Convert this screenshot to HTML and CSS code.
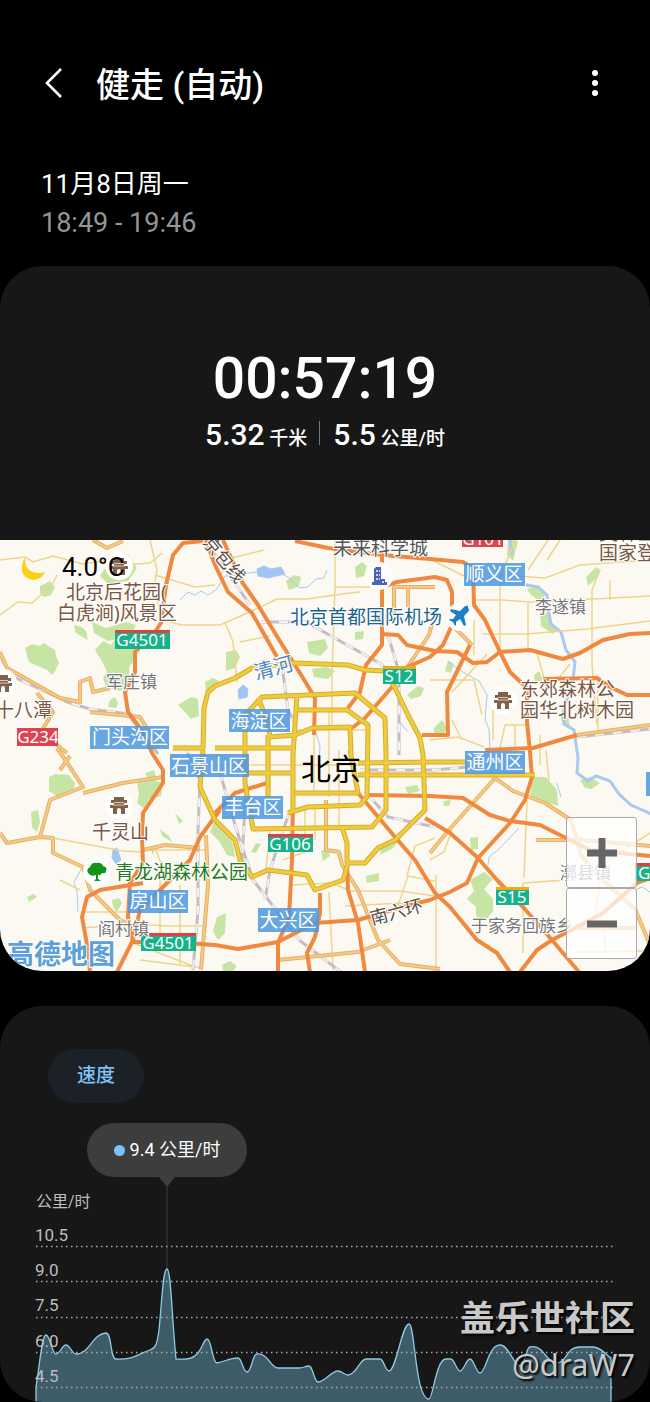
FILE: index.html
```html
<!DOCTYPE html>
<html lang="zh-CN">
<head>
    <meta charset="UTF-8">
    <meta name="viewport" content="width=device-width, initial-scale=1.0">
    <title>健走 (自动)</title>
    <link rel="stylesheet" href="styles.css">
</head>
<body>
    <header class="top-bar">
        <a href="#" class="back" aria-label="返回">
            <svg width="20" height="32" viewBox="0 0 20 32"><path d="M17 2 3 16l14 14" fill="none" stroke="#fff" stroke-width="2.6"/></svg>
        </a>
        <h1>健走 (自动)</h1>
        <button class="more" aria-label="更多">
            <svg width="8" height="28" viewBox="0 0 8 28" fill="#fff"><circle cx="4" cy="4" r="3"/><circle cx="4" cy="14" r="3"/><circle cx="4" cy="24" r="3"/></svg>
        </button>
    </header>

    <div class="when">
        <p>11月8日周一</p>
        <p class="hours">18:49 - 19:46</p>
    </div>

    <section class="summary">
        <div class="totals">
            <p class="duration">00:57:19</p>
            <div class="stats">
                <p><b>5.32</b> 千米</p>
                <p><b>5.5</b> 公里/时</p>
            </div>
        </div>

        <div class="map">
            <svg class="map-canvas" viewBox="0 540 650 431" role="img" aria-label="北京地图">
                <defs>
                    <g id="temple">
                        <circle r="14" fill="#fff"/>
                        <path d="M-5-8h10v3h3v3h-3v2h4v3H6v6H2V5q0-2-2-2t-2 2v4h-4V3h-3V0h4v-2h-3v-3h3z" fill="#80614a"/>
                        <path d="M-5-2.500H5M-6 0H6" stroke="#d9c9b8" fill="none"/>
                    </g>
                </defs>

                <!-- parks -->
                <g class="park">
                    <path d="M25 648l7-4 8 2 4-3 6 4 5 3 1 6 3 7-4 8-3 4-5-5-7-3-11-5z"/>
                    <path d="M95 650l8-9 8 4 5-7 9 4 9 5v14l-5 6 1 18-10 6-14-4-3-9 4-6-4-9z"/>
                    <path d="M74 625l8 2 4 4 2 9-7-4-6-4zM92 622l14 6 20-6 10 3-6 12-22 4-14-8z"/>
                    <path d="M110 560l18-6 9 14-9 13-20 3-8-8zM40 586l10-5 5 6-4 8-7 2-4-4z"/>
                    <path d="M178 705l13-8 7 2 1 17-8 3-6-7zM205 682l8-4 6 3-5 9-8 1zM110 700l5-3 3 6-2 5-8-1z"/>
                    <path d="M49 777l6-3 14 1 6 8-2 9-15 5-9-6zM31 812l7-2 2 12-3 10-5-4z"/>
                    <path d="M137 783l14-4 12 4-2 13-12 3-4 10-8-6 2-9zM145 773l9-3 2 6-7 4z"/>
                    <path d="M27 897l7-3 3 3-8 5zM112 900l7-2 3 5-5 9-4-5zM160 829l9 7 3 6-10-6zM175 813l8 8-4 3zM151 846l6 1-5 8z"/>
                    <path d="M215 820l10 8 8 16 2 13-8-2-8-14-9-9zM217 917l9-4-1 20-7 7-5-9zM222 965l8-4 7 5-4 5h-10z"/>
                    <path d="M226 652l10-2 4 7-5 11-9 3zM307 642l18-3 3 9-8 8-11-3zM312 669l14-2 9 4-7 8-14-2zM355 632l9-1-1 8-8 1z"/>
                    <path d="M355 567l7-5 5 4-3 10-8 2zM286 581l8-6 7 2-2 9-10 4zM407 695l11-9 6 2-3 8-10 3z"/>
                    <path d="M508 540l10 1-5 20-6-6zM527 589l10-3 8 8-2 9-12-8zM540 612l8 2 3 8 7 7-5 5-12-8zM586 577l10-10 5 3-5 9-8 7z"/>
                    <path d="M534 675l5-4 4 9-8 5zM434 728l8-8 5 8-4 8-9-2zM448 660l6 4-3 9-6-2zM560 715l8 3 2 8-7-2z"/>
                    <path d="M533 777h13l11 13 1 16-13-4-15-7zM470 838l8-1v12l-7 1zM580 780l10-3 10 6-8 6-7-1z"/>
                    <path d="M470 880l14-8 9 7-9 10 9 10v12l-7 9-10-3v-10l-9-8 7-8zM405 787l12-2 3 6-12 3zM381 847l14-8 7-2-9 11-13 7zM366 876l13-3v8l-12 2z"/>
                    <path d="M321 851l7-3 2 8-7 5zM256 843l5 1-5 9-5-1zM443 801l8-1-2 6h-5z"/>
                </g>

                <!-- water -->
                <g class="water">
                    <path d="M180 600l8-8 7 3 6-4 7 4 8-5 9-14 10-1 21-3 12 2 10-2 12 6 9 10 9-1 8-8 8-1 3-8"/>
                    <path d="M82 868l-8 14 3 10 1 20M650 892l-8-5-7 3M400 722l7 9M315 730l5 16-1 20M490 750l-1-21-4-9 2-25-8-14-16-9-15-10"/>
                    <path class="river" d="M510 540l2 15M526 585l12 2 9 8 1 14 3 15 10 8 5 18 9 12-2 18-5 16-5 16 1 12 10 6 4 28-1 15 11 8 8-5 14 5 9 13 12 11 16 7 10 6"/>
                    <path d="M557 783l4 14M488 865l1-8 10-8 20-21M500 905l12-12"/>
                    <path d="M257 569l7-3 7 3 10-2 4 7-17 4-10-2zM238 690l5-5 5 4-1 8-8 2zM113 850l4-2 4 12-5 4-4-6z" fill="#9fc5f0"/>
                </g>

                <!-- minor roads -->
                <g class="lane">
                    <path d="M0 560l25-3 8 5 20-6 30 8 20-3 22 4 25-2 12-10M0 615l18-13 14 1 20-18 5-10M150 540l7 30-3 18 8 32 20 5h38l32-14 25-12h30l35-5 18-2"/>
                    <path d="M335 540v47l-3 90v48M225 622l8 20 4 40M240 642l30-6M220 575l12-17 32-8M155 575l40 12 20-2M335 587h47"/>
                    <path d="M474 600h28l28 2 63-3 57-3M500 575l45 3 35-13 70-5M515 540l-15 38M548 540l-20 30M560 540l-13 20M600 570l-8 20v75l5 60M610 580v20"/>
                    <path d="M482 634h45l60-5 63-8M487 654l-35 38M493 690v50M474 620v35M528 603v47M500 572v78M430 559l40 20M430 680h44l8 35M558 679l12-15M536 650l10 35"/>
                    <path d="M430 740l28-3 26 10M452 720l10 20M505 725h25M515 725v23M540 735v30M598 680v52M505 725l-5 23M546 750l3 30M527 800l-3 78M523 883l43-3"/>
                    <path d="M53 838l70 13 20 1M60 880l20 10M83 912h55M83 928l50-4 36 2h38M150 850h55M160 880v70M180 885v80M155 848l12 30M140 960l63 8M133 943l60 23"/>
                    <path d="M291 885l40-2 20 8h50l34 5M329 892l4 78M345 906l58-3M315 840v-34M339 750v77M398 906l10-30 27 5M435 838l-20 8-8 30M430 860l14-8 8-22M436 875v97M523 883v70M577 952l67-1M601 915l5 36M595 913l9-50 46-30"/>
                    <path d="M270 830l-4 40M305 810v42l-22 8M231 812h25M270 741v50M314 735v60M329 710v87M215 765h145M293 730h75"/>
                </g>

                <!-- railways -->
                <g class="rail">
                    <path d="M205 540l45 65M261 622h45l75 42 8 8M282 665l6 45 8 15M215 755l20 70 18 55 46 60 42 32M0 655l10 20 60 28 20 6 38 5 30 40"/>
                    <path d="M388 635l11 37v83M200 780l-2 50 0 80-5 60M184 745l18 40M290 810l-20 60-5 30M360 770h75l32-3M368 795l20 22 47 10M577 737l73-8M246 790l-4 70"/>
                </g>
                <g class="rail rail-dash">
                    <path d="M205 540l45 65M261 622h45l75 42 8 8M282 665l6 45 8 15M215 755l20 70 18 55 46 60 42 32M0 655l10 20 60 28 20 6 38 5 30 40"/>
                    <path d="M388 635l11 37v83M200 780l-2 50 0 80-5 60M184 745l18 40M290 810l-20 60-5 30M360 770h75l32-3M368 795l20 22 47 10M577 737l73-8M246 790l-4 70"/>
                </g>

                <!-- country roads -->
                <g class="road-case">
                    <path id="r1" d="M0 652l7 16 30 17 23 13 20 4v-20l10-4 3 14 17-4M37 693l16 19-12 20 26 21M57 748l13 19 13 20-33 13-10 37-33 6-7-10M83 793l40-10 40-6M40 837l13 1v15l30 14 7 23 30 30 20 10"/>
                    <path id="r2" d="M93 540l14 8 16-7M394 613v-26h41M408 587v20M404 672l25-37 6-22M452 625l20 20M326 800v50l13 2 3 13 16 25 20 50 22 24 40 5"/>
                    <path id="r3" d="M495 778l-22 25-25 28-18 22M495 778l18 13 32 12 26 17 10 35 16 20 38 34 15 36M577 735l73-10M536 840h46l68 6M278 960l80-8 32-12M577 928h60M206 835l2 50-7 85M143 850l22-5 35 3M60 770l10-14M90 712l50 5 18 30"/>
                </g>
                <g class="road-tan">
                    <use href="#r1"/><use href="#r2"/><use href="#r3"/>
                </g>

                <!-- motorways -->
                <g class="motorway">
                    <path d="M206 540l9 25 13 27 24 21 25 44M203 541l-20 2-10 12-7 30-5 38-6 9-20 20v20l-10 20 3 20 15 20 9 21 11 17v13l-20 30-1 24 1 26-13 20-2 34 5 24"/>
                    <path d="M223 540l19 42 16 23 20 33 25 40 12 20-1 37M295 541l33 7 54 7 48 4 33 3 10 6 1 37 11 15 15 32 10 20 17 16v34l3 30 2 25-7 23-15 23-32 35-11 25-17 9-20 8-28 7-44 13-43 3-37 19-40 7-23-4-30-2-52-1"/>
                    <path d="M382 555v90l-16 20-6 27-12 16M382 587l15-5 38-5 12 3 5 12v33l-9 20-13 12-25 11-13 19-27 31-13 10M382 634l16 1 9 10 28 6 22 1 16 11 14-1 13-10 30-2 33 9 17-6 23-13 27-6 20-1"/>
                    <path d="M470 645l-23 47 1 43h-26M543 679l54-1 13 9 17 8h23M485 750l48-2 44-13"/>
                    <path d="M358 793l37 44 20 23 20 33 15 14 27 33 20 13 13 19M368 795l62 1 33 2 27 17 20 6 30 4 30 15 20 10 60 6M425 818l25 15 27 24 20 23 26 27 29 33 27 32M520 972l17-22 15-10 25-13 26-14 34-30 13-5"/>
                    <path d="M293 797l-1 63-3 57-11 26v29M347 863l1 27 10 33 7 49M320 893v20l-5 24-8 16 3 19M215 813l20-20 32-10M220 810l-20 27-10 23-23 23-27 27-7 30-16 32M143 883l-43 7-13 7-5 20 6 33 2 22"/>
                </g>

                <!-- ring roads -->
                <g class="ring-case">
                    <path d="M173 748h30l1-40 4-16 7-6 20-8 17-10 41-5 55 2 17 5 20 1 10 17 13 27 12 23 3 17 2 55-30 30-17 8-13 15h-17l-5 17-28 10-8-15-39-5-16 7-12-17-5-20-20-20-15-33 3-37"/>
                    <path d="M245 750v-35l17-18 93-4 30 25 1 37v55l-14 17-119 2-8-46v-40M297 695l-4 60v55M298 710h49l21 15-1 72-7 8-52 2-20 6M258 698l10 24 2 15 25-2 17-7 38-1 1 26"/>
                    <path d="M245 773h50M268 735v62M215 748h78M350 750l8 43h-63M358 763l77-1h32M358 775h177M342 827l5 16v20"/>
                </g>
                <g class="ring">
                    <path d="M173 748h30l1-40 4-16 7-6 20-8 17-10 41-5 55 2 17 5 20 1 10 17 13 27 12 23 3 17 2 55-30 30-17 8-13 15h-17l-5 17-28 10-8-15-39-5-16 7-12-17-5-20-20-20-15-33 3-37"/>
                    <path d="M245 750v-35l17-18 93-4 30 25 1 37v55l-14 17-119 2-8-46v-40M297 695l-4 60v55M298 710h49l21 15-1 72-7 8-52 2-20 6M258 698l10 24 2 15 25-2 17-7 38-1 1 26"/>
                    <path d="M245 773h50M268 735v62M215 748h78M350 750l8 43h-63M358 763l77-1h32M358 775h177M342 827l5 16v20"/>
                </g>

                <!-- place marks -->
                <use href="#temple" x="119" y="805"/>
                <use href="#temple" x="503" y="700"/>
                <use href="#temple" x="3" y="683"/>
                <use href="#temple" x="119" y="566"/>
                <g transform="translate(379 576)">
                    <circle r="14" fill="#fff"/>
                    <path d="M-5-7l2-2h5v12h4v3h2v3H-7V6h2z" fill="#4f62ad"/>
                    <path d="M-3-6h2v2h-2zM0-6h1v2H0zM-3-2h2v2h-2zM0-2h1v2H0zM-3 2h2v2h-2zM0 2h1v2H0zM3 5h2v2H3z" fill="#c9d2f2"/>
                </g>
                <g transform="translate(460 617)">
                    <circle r="14" fill="#fff"/>
                    <path d="M8-9q2 1 0 4L4-1l2 9-2 1-4-7-4 3 0 3-1 1-2-4-4-2 1-1h3l3-4-6-4 1-2 9 2 4-4q2-2 4-1z" fill="#1f7fc4"/>
                </g>
                <g transform="translate(97 872)">
                    <circle r="14" fill="#fff"/>
                    <path d="M-9 1q-2-4 2-6 2-5 7-4 4-1 6 3 5 1 3 5 0 3-4 2-3 4-4 1v5l3 2h-7l2-2V3q-5 2-8-2z" fill="#149414"/>
                </g>

                <g class="road-no">
                    <path d="M115 630h55v19h-55zM141 933h55v18h-55zM268 834h45v18h-45zM383 666h33v18h-33zM496 887h33v18h-33zM635 863h20v18h-20z" fill="#16b28a"/>
                    <path d="M115 630h55v3h-55zM141 933h55v3h-55zM268 834h45v3h-45zM635 863h20v3h-20z" fill="#e0403f"/>
                    <path d="M383 666h33v3h-33zM496 887h33v3h-33z" fill="#e9ac1a"/>
                    <path d="M17 728h41v18H17zM462 530h41v17h-41z" fill="#dd4350"/>
                    <text x="142" y="646">G4501</text>
                    <text x="168" y="949">G4501</text>
                    <text x="290" y="850">G106</text>
                    <text x="399" y="682">S12</text>
                    <text x="512" y="903">S15</text>
                    <text x="38" y="743">G234</text>
                    <text x="483" y="545">G101</text>
                    <text x="654" y="879">G95</text>
                </g>

                <g class="district">
                    <path d="M229 709h61v23h-61zM90 726h79v23H90zM170 754h79v23h-79zM222 796h61v23h-61zM464 563h61v23h-61zM465 751h60v23h-60zM128 890h60v23h-60zM258 908h61v24h-61zM646 772h10v24h-10z"/>
                    <text x="259" y="728">海淀区</text>
                    <text x="130" y="744">门头沟区</text>
                    <text x="209" y="773">石景山区</text>
                    <text x="253" y="814">丰台区</text>
                    <text x="494" y="581">顺义区</text>
                    <text x="495" y="769">通州区</text>
                    <text x="158" y="908">房山区</text>
                    <text x="288" y="927">大兴区</text>
                </g>

                <g class="sight">
                    <text x="66" y="599">北京后花园(</text>
                    <text x="57" y="620">白虎涧)风景区</text>
                    <text x="520" y="696">东郊森林公</text>
                    <text x="520" y="717">园华北树木园</text>
                    <text x="92" y="839">千灵山</text>
                    <text x="-5" y="717">十八潭</text>
                    <text x="599" y="560">国家登山</text>
                    <text x="599" y="540">奥林匹克</text>
                    <text x="290" y="624" fill="#1a6490">北京首都国际机场</text>
                    <text x="115" y="879" fill="#1e7a20">青龙湖森林公园</text>
                    <text x="333" y="555" fill="#555">未来科学城</text>
                </g>
                <g class="town">
                    <text x="106" y="688">军庄镇</text>
                    <text x="535" y="613">李遂镇</text>
                    <text x="98" y="935">阎村镇</text>
                    <text x="471" y="932">于家务回族乡</text>
                    <text x="560" y="879">漷县镇</text>
                </g>
                <text class="road-name" transform="translate(372 925) rotate(-15)">南六环</text>
                <text class="road-name" transform="translate(202 543) rotate(50)">京包线</text>
                <text class="river-name" transform="translate(256 680) rotate(-15)">清河</text>
                <text class="city" x="331" y="780">北京</text>

                <path d="M26 557q-3 11 7 15 6 2 12 0-4 8-12 8-9-1-11-9-1-9 4-14z" fill="#ffd018"/>
                <text class="temperature" x="62" y="576">4.0°C</text>
                <text class="map-brand" x="7" y="964">高德地图</text>
            </svg>
            <div class="zoom">
                <button aria-label="放大"><svg width="30" height="30" viewBox="0 0 30 30"><path d="M15 0v30M0 15h30" stroke="#666" stroke-width="7"/></svg></button>
                <button aria-label="缩小"><svg width="30" height="30" viewBox="0 0 30 30"><path d="M0 15h30" stroke="#666" stroke-width="7"/></svg></button>
            </div>
        </div>
    </section>

    <section class="speed">
        <button class="tab">速度</button>
        <div class="tooltip"><span class="dot"></span>9.4 公里/时</div>
        <svg class="chart" viewBox="0 1177 650 225" role="img" aria-label="速度 公里/时">
            <path d="M159 1177h16l-8 10z" fill="#3d3d3d"/>
            <path d="M167 1187v83" stroke="#3d3d3d"/>
            <path class="area" d="M36 1402V1387C40 1362 42 1335 46 1335C50 1335 52 1354 56 1354C60 1354 62 1345 66 1345C70 1345 72 1354 76 1354C90 1354 92 1334 106 1333C112 1333 110 1359 116 1359C133 1360 138 1354 150 1350C156 1348 157 1344 159 1330C162 1300 163 1269 167 1269C171 1269 172 1320 176 1359C187 1359 191 1360 197 1354C202 1349 204 1339 207 1339C212 1339 212 1363 217 1363C226 1361 230 1358 238 1358C242 1358 243 1372 247 1372C252 1372 252 1354 257 1354C268 1353 271 1368 278 1368H299C303 1368 305 1366 309 1366C313 1366 314 1382 318 1382C325 1382 331 1371 338 1371C342 1371 344 1375 348 1375C356 1375 360 1359 366 1359H380C384 1359 385 1371 389 1371C396 1371 402 1324 409 1324C415 1324 415 1399 429 1399C433 1399 436 1359 446 1359H451C454 1359 457 1371 460 1371C464 1371 466 1359 470 1359C474 1359 476 1373 480 1373C486 1373 488 1345 500 1345C509 1345 514 1366 520 1366C525 1366 526 1347 530 1347C544 1344 546 1363 556 1363C568 1363 565 1347 580 1347H593C601 1347 605 1354 611 1358V1402"/>
            <path class="grid" d="M36 1246.500H615M36 1281.500H615M36 1317.500H615M36 1352.500H615M36 1387.500H615"/>
            <g class="axis">
                <text class="unit" x="36" y="1207">公里/时</text>
                <text x="35" y="1241">10.5</text>
                <text x="35" y="1276">9.0</text>
                <text x="35" y="1311">7.5</text>
                <text x="35" y="1347">6.0</text>
                <text x="35" y="1382">4.5</text>
            </g>
        </svg>
        <div class="watermark">
            <p class="forum">盖乐世社区</p>
            <p>@draW7</p>
        </div>
    </section>
</body>
</html>
```
FILE: styles.css
```css
body {
    margin: 0;
    background-color: #000;
    color: #fff;
    font-family: Roboto, "Noto Sans CJK SC", sans-serif;
}

h1, p {
    margin: 0;
}

button {
    border: none;
    padding: 0;
    cursor: pointer;
    font-family: inherit;
}

svg {
    display: block;
}

.top-bar {
    display: flex;
    align-items: center;
    gap: 32px;
    padding: 58px 51px 0 44px;
}

.top-bar h1 {
    flex-grow: 1;
    padding-top: 4px;
    font-size: 34px;
    font-weight: 500;
    line-height: 46px;
}

.more {
    background: none;
}

.when {
    padding: 57px 41px 23px;
    font-size: 26px;
    line-height: 39px;
}

.when .hours {
    color: #959595;
    font-size: 27px;
}

.summary {
    border-radius: 42px;
    overflow: hidden;
    background-color: #171717;
}

.totals {
    padding: 77px 20px 81px;
    text-align: center;
}

.duration {
    font-size: 57px;
    font-weight: 500;
    line-height: 72px;
}

.stats {
    display: flex;
    justify-content: center;
    align-items: center;
    font-size: 19px;
    font-weight: 500;
    line-height: 40px;
}

.stats b {
    font-size: 30px;
    font-weight: 500;
}

.stats p + p::before {
    content: "";
    display: inline-block;
    width: 1px;
    height: 24px;
    margin: 0 13px 0 12px;
    background-color: #777;
}

.map {
    position: relative;
}

.map-canvas {
    width: 100%;
    background-color: #fcf9f2;
    font-family: "Noto Sans", "Noto Sans CJK SC", sans-serif;
}

.park {
    fill: #c6e5a4;
}

.water {
    fill: none;
    stroke: #a9c9f0;
    stroke-width: 1;
}

.river {
    stroke-width: 3;
}

.lane {
    fill: none;
    stroke: #eed58d;
    stroke-width: 1.5;
}

.rail {
    fill: none;
    stroke: #c5bcc4;
    stroke-width: 3;
}

.rail-dash {
    stroke: #f4f1f2;
    stroke-width: 2;
    stroke-dasharray: 9 9;
}

.road-case, .road-tan, .motorway, .ring-case, .ring {
    fill: none;
    stroke-linejoin: round;
}

.road-case {
    stroke: #e6b05f;
    stroke-width: 4;
}

.road-tan {
    stroke: #f5c98c;
    stroke-width: 2;
}

.motorway {
    stroke: #f0893f;
    stroke-width: 4;
}

.ring-case {
    stroke: #d5ae27;
    stroke-width: 5;
}

.ring {
    stroke: #f0cb40;
    stroke-width: 3;
}

.road-no text {
    font-size: 17px;
    fill: #fff;
    text-anchor: middle;
}

.district path {
    fill: #4b98df;
    fill-opacity: .85;
}

.district text {
    font-size: 19px;
    fill: #fff;
    text-anchor: middle;
}

.sight, .town, .road-name, .river-name, .map-brand {
    stroke: #fff;
    stroke-width: 2;
    paint-order: stroke;
}

.sight {
    font-size: 19px;
    fill: #7a5643;
}

.town {
    font-size: 17px;
    fill: #777;
}

.road-name {
    font-size: 18px;
    fill: #5a5048;
}

.river-name {
    font-size: 20px;
    fill: #5488b8;
}

.city {
    font-size: 30px;
    text-anchor: middle;
}

.temperature {
    font-family: Roboto, sans-serif;
    font-size: 26px;
}

.map-brand {
    font-size: 27px;
    font-weight: bold;
    fill: #5d9fd8;
}

.zoom {
    position: absolute;
    right: 13px;
    bottom: 12px;
    display: flex;
    flex-direction: column;
}

.zoom button {
    display: flex;
    align-items: center;
    justify-content: center;
    width: 71px;
    height: 71px;
    border: 1px solid #aaa;
    border-radius: 3px;
    background-color: rgba(255, 255, 255, .75);
}

.speed {
    position: relative;
    margin-top: 35px;
    padding-top: 43px;
    border-radius: 42px;
    overflow: hidden;
    background-color: #171717;
}

.tab {
    display: block;
    margin-left: 48px;
    padding: 0 29px;
    border-radius: 27px;
    background-color: #1b2126;
    color: #7fc1fa;
    font-size: 19px;
    font-weight: 500;
    line-height: 54px;
}

.tooltip {
    display: flex;
    align-items: center;
    justify-content: center;
    gap: 5px;
    width: 160px;
    margin: 20px 0 0 87px;
    border-radius: 27px;
    background-color: #3d3d3d;
    font-size: 18px;
    line-height: 54px;
}

.dot {
    width: 11px;
    height: 11px;
    border-radius: 50%;
    background-color: #7cc3fb;
}

.chart {
    width: 100%;
}

.area {
    fill: #3e5b68;
    stroke: #8dcbe6;
    stroke-width: 1.3;
}

.grid {
    stroke: #aaa;
    stroke-width: 1.5;
    stroke-dasharray: 1.5 3.5;
}

.axis {
    fill: #bdbdbd;
    font-size: 17px;
}

.unit {
    font-size: 16px;
}

.watermark {
    position: absolute;
    right: 15px;
    bottom: 15px;
    color: #c9c9c9;
    font-family: "Noto Sans", "Noto Sans CJK SC", sans-serif;
    font-size: 31px;
    line-height: 46px;
    text-align: right;
    text-shadow: 2px 2px 2px #000;
}

.forum {
    font-size: 35px;
    font-weight: bold;
}
```
